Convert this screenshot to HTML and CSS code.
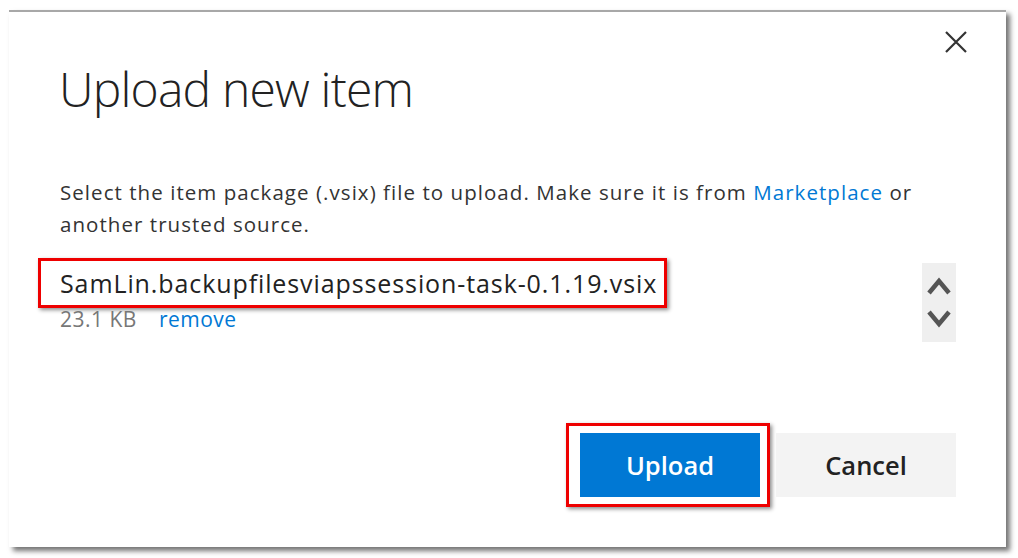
FILE: index.html
```html
<!DOCTYPE html>
<html>
<head>
<meta charset="utf-8">
<link rel="stylesheet" href="styles.css">
</head>
<body>
<div class="dialog">
  <div class="top">
    <button class="close" aria-label="Close">
      <svg width="24" height="24" viewBox="0 0 24 24"><path d="M2 2 L22 22 M22 2 L2 22" stroke="#333" stroke-width="2.2" fill="none"/></svg>
    </button>
  </div>
  <h1 class="title">Upload new item</h1>
  <p class="desc">Select the item package (.vsix) file to upload. Make sure it is from <a class="link" href="#">Marketplace</a> or another trusted source.</p>
  <div class="file">
    <div class="file-info">
      <div class="hl hl-file"><span class="fname">SamLin.backupfilesviapssession-task-0.1.19.vsix</span></div>
      <div class="meta"><span class="size">23.1 KB</span><a class="link remove" href="#">remove</a></div>
    </div>
    <div class="scroller">
      <svg width="24" height="20" viewBox="0 0 24 20"><path d="M2 17 L12 5 L22 17" stroke="#555" stroke-width="4.5" fill="none"/></svg>
      <svg width="24" height="20" viewBox="0 0 24 20"><path d="M2 3 L12 15 L22 3" stroke="#555" stroke-width="4.5" fill="none"/></svg>
    </div>
  </div>
  <div class="actions">
    <div class="hl hl-btn"><button class="btn primary">Upload</button></div>
    <button class="btn secondary">Cancel</button>
  </div>
</div>
</body>
</html>
```

FILE: styles.css
```css
html, body {
  margin: 0;
  padding: 0;
  background: #ffffff;
}
body {
  font-family: "Open Sans", "Noto Sans", sans-serif;
  color: #333;
  padding: 10px 0 0 9px;
  height: 558px;
  box-sizing: border-box;
}
.dialog {
  box-sizing: border-box;
  width: 997px;
  height: 537px;
  background: #fff;
  border-top: 2px solid #a8a8a8;
  box-shadow: 4px 4px 5px rgba(0, 0, 0, 0.55);
  padding: 0 50px 0 51px;
  display: flex;
  flex-direction: column;
}
.top {
  display: flex;
  justify-content: flex-end;
  padding-top: 18px;
  margin-right: -12px;
  height: 24px;
}
.close {
  border: 0;
  background: none;
  padding: 0;
  width: 24px;
  height: 24px;
  cursor: pointer;
}
.close svg { display: block; }
.title {
  margin: 5px 0 0 -1px;
  font-weight: 300;
  font-size: 48px;
  line-height: 60px;
  color: #222;
  letter-spacing: -0.8px;
}
.desc {
  margin: 57px 0 0 0;
  font-size: 20.5px;
  line-height: 32px;
  letter-spacing: 1.05px;
  color: #333;
}
.link {
  color: #0078d4;
  text-decoration: none;
}
.file {
  margin-top: 18px;
  display: flex;
  justify-content: space-between;
  align-items: flex-start;
}
.hl {
  border: 3px solid #ee0000;
  box-shadow: 2px 2px 4px rgba(0, 0, 0, 0.45);
  box-sizing: border-box;
}
.hl-file {
  display: inline-block;
  margin-left: -22px;
  padding: 0 7px 0 19px;
  height: 50px;
  line-height: 44px;
}
.fname {
  font-size: 25px;
  letter-spacing: 0.9px;
  color: #222;
}
.meta {
  font-size: 21px;
  letter-spacing: 0.5px;
  line-height: 24px;
  margin-top: -1px;
}
.size { color: #777; }
.remove { margin-left: 22px; }
.scroller {
  margin-top: 5px;
  width: 34px;
  height: 79px;
  background: #efefef;
  display: flex;
  flex-direction: column;
  align-items: center;
  justify-content: space-around;
  padding: 6px 0;
  box-sizing: border-box;
}
.scroller svg { display: block; }
.actions {
  margin-top: auto;
  margin-bottom: 40px;
  display: flex;
  justify-content: flex-end;
  align-items: center;
}
.hl-btn {
  padding: 7px 7px 7px 11px;
  margin-right: 6px;
}
.btn {
  width: 180px;
  height: 64px;
  border: 0;
  font-family: "Open Sans", "Noto Sans", sans-serif;
  font-size: 25.5px;
  font-weight: 600;
  display: block;
}
.primary {
  background: #0078d4;
  color: #fff;
}
.secondary {
  background: #f3f3f3;
  color: #222;
}
```
